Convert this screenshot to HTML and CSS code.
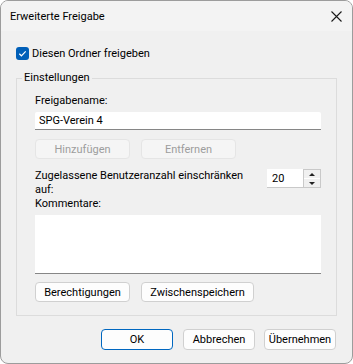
FILE: index.html
```html
<!DOCTYPE html>
<html lang="de">
<head>
  <meta charset="UTF-8">
  <title>Erweiterte Freigabe</title>
  <link rel="stylesheet" href="styles.css">
</head>
<body>

  <div class="window">
    <div class="titlebar">
      <span class="title">Erweiterte Freigabe</span>
      <svg class="close" width="11" height="11" viewBox="0 0 11 11">
        <path d="M0.5 0.5 L10.5 10.5 M10.5 0.5 L0.5 10.5" stroke="#1a1a1a" stroke-width="1.1" fill="none"/>
      </svg>
    </div>

    <div class="content">
      <label class="check-row">
        <span class="checkbox">
          <svg width="13" height="13" viewBox="0 0 13 13">
            <path d="M3.3 6.8 L5.4 8.8 L9.7 4.4" stroke="#fff" stroke-width="1.2" fill="none"/>
          </svg>
        </span>
        Diesen Ordner freigeben
      </label>

      <fieldset class="group">
        <legend>Einstellungen</legend>

        <p class="label first">Freigabename:</p>
        <div class="textbox">SPG-Verein 4</div>

        <div class="button-row">
          <button class="btn disabled">Hinzufügen</button>
          <button class="btn disabled">Entfernen</button>
        </div>

        <div class="limit-row">
          <p class="label limit-text">Zugelassene Benutzeranzahl einschränken auf:</p>
          <div class="spinner">
            <span class="spin-value">20</span>
            <span class="spin-arrows">
              <span class="arrow up"></span>
              <span class="arrow down"></span>
            </span>
          </div>
        </div>

        <p class="label">Kommentare:</p>
        <div class="textarea"></div>

        <div class="button-row second">
          <button class="btn">Berechtigungen</button>
          <button class="btn wide">Zwischenspeichern</button>
        </div>
      </fieldset>

      <div class="footer">
        <button class="btn dialog default">OK</button>
        <button class="btn dialog">Abbrechen</button>
        <button class="btn dialog">Übernehmen</button>
      </div>
    </div>
  </div>

</body>
</html>
```

FILE: styles.css
```css
body {
  margin: 0;
  padding: 0;
  background-color: #ffffff;
  font-family: Roboto, "Noto Sans", sans-serif;
  font-size: 11px;
  color: #000;
}

.window {
  width: 351px;
  height: 362px;
  border: 1px solid #9c9c9c;
  border-radius: 8px;
  background-color: #f0f0f0;
  overflow: hidden;
}

.titlebar {
  height: 30px;
  display: flex;
  align-items: center;
  justify-content: space-between;
  padding: 0 10px 0 9px;
  background-color: #f3f3f3;
}

.title {
  margin-top: 1px;
}

.close {
  margin-top: 1px;
}

.content {
  padding: 16px 15px 0 15px;
}

/* Checkbox */
.check-row {
  display: flex;
  align-items: center;
  height: 13px;
  line-height: 13px;
}

.checkbox {
  width: 13px;
  height: 13px;
  margin-right: 3px;
  border-radius: 3px;
  background-color: #005fb8;
  display: flex;
}

/* Group box */
.group {
  margin: 11px 0 0 0;
  padding: 0 15px 13px 18px;
  border: 1px solid #dcdcdc;
  border-radius: 0;
}

.group legend {
  padding: 0 2px;
  margin-left: -13px;
  line-height: 14px;
}

.label {
  margin: 0;
  line-height: 14px;
}

.label.first {
  margin-top: 9px;
}

.textbox {
  margin-top: 4px;
  height: 17px;
  line-height: 18px;
  padding-left: 4px;
  background-color: #fff;
  border-bottom: 1px solid #868686;
  border-radius: 2px 2px 0 0;
}

.button-row {
  display: flex;
  gap: 11px;
  margin-top: 9px;
}

.button-row.second {
  margin-top: 8px;
}

.btn {
  width: 95px;
  height: 20px;
  padding: 0;
  font-family: inherit;
  font-size: 11px;
  color: #000;
  background-color: #fdfdfd;
  border: 1px solid #d0d0d0;
  border-radius: 4px;
}

.btn.wide {
  width: 113px;
}

.btn.disabled {
  color: #9d9d9d;
  background-color: #f5f5f5;
  border-color: #e5e5e5;
}

/* Limit row with spinner */
.limit-row {
  display: flex;
  justify-content: space-between;
  align-items: flex-start;
  margin-top: 10px;
}

.limit-text {
  width: 225px;
}

.spinner {
  display: flex;
  width: 53px;
  height: 18px;
  border: 1px solid #c9c9c9;
  border-left: none;
  border-top: none;
  background-color: #fff;
}

.spin-value {
  flex: 1;
  padding-left: 5px;
  line-height: 19px;
}

.spin-arrows {
  width: 16px;
  display: flex;
  flex-direction: column;
  border-left: 1px solid #c9c9c9;
  border-top: 1px solid #c9c9c9;
}

.arrow {
  flex: 1;
  display: flex;
  align-items: center;
  justify-content: center;
  background-color: #f0f0f0;
}

.arrow.up {
  border-bottom: 1px solid #fff;
}

.arrow.up::after {
  content: "";
  border-left: 3px solid transparent;
  border-right: 3px solid transparent;
  border-bottom: 3px solid #222;
}

.arrow.down::after {
  content: "";
  border-left: 3px solid transparent;
  border-right: 3px solid transparent;
  border-top: 3px solid #222;
}

.textarea {
  margin-top: 4px;
  height: 58px;
  background-color: #fff;
  border-bottom: 1px solid #868686;
}

/* Dialog buttons */
.footer {
  display: flex;
  justify-content: flex-end;
  gap: 9px;
  margin-top: 13px;
  padding-right: 1px;
}

.btn.dialog {
  width: 72px;
  height: 21px;
}

.btn.default {
  border: 1px solid #0067c0;
  margin-right: 1px;
}
```
